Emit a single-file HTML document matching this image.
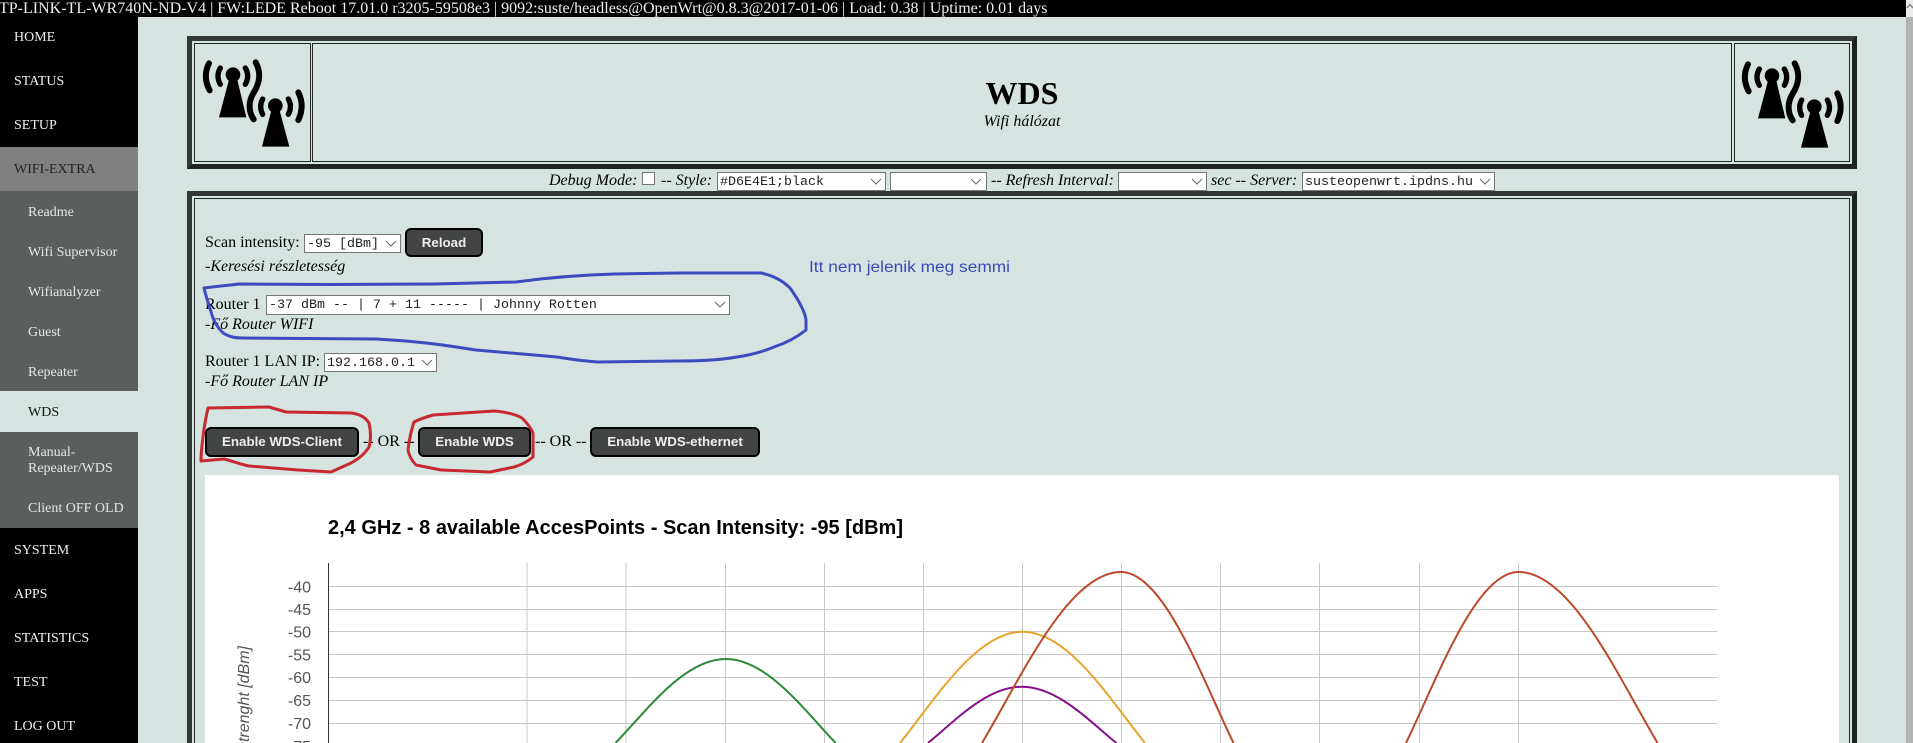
<!DOCTYPE html>
<html lang="hu"><head><meta charset="utf-8"><title>WDS</title>
<style>
html,body{margin:0;padding:0;width:1913px;height:743px;overflow:hidden;background:#D6E4E1}
body{position:relative;font:16px/18px "Liberation Serif",serif;color:#000}
.a{position:absolute;box-sizing:border-box}
.t{position:absolute;white-space:nowrap;line-height:18px}
.i{font-style:italic}
#top{left:0;top:0;width:1906px;height:17px;background:#000;color:#eee;line-height:18px;white-space:nowrap;overflow:hidden;text-indent:-1px}
#side{left:0;top:17px;width:138px;height:726px;background:#000}
.m{position:absolute;left:0;width:138px;font-size:14px;white-space:nowrap;color:#f0f0f0;line-height:16px}
.m.top{padding-left:14px;box-sizing:border-box}
.m.sub{padding-left:28px;box-sizing:border-box;color:#e6e6e6}
.frame{position:absolute;box-sizing:border-box;border-style:solid;border-width:5px;border-color:#333836 #1e2321 #1e2321 #333836}
.cell{position:absolute;box-sizing:border-box;border:1px solid #222725}
select{position:absolute;box-sizing:border-box;appearance:none;-webkit-appearance:none;background:#fff;border:1px solid #767676;border-radius:0;margin:0;padding:1px 0 0 2px;font:13.33px "Liberation Mono",monospace;color:#222}
.btn{position:absolute;box-sizing:border-box;background:#434544;border:2px solid #000;border-radius:6px;color:#eee;font:bold 13.33px/1 "Liberation Sans",sans-serif;text-align:center;display:flex;align-items:center;justify-content:center;white-space:nowrap;padding:0}
#cb{position:absolute;left:642px;top:172px;width:13px;height:13px;box-sizing:border-box;background:#fff;border:1px solid #767676}
#white{left:205px;top:475px;width:1634px;height:268px;background:#fff}
svg{position:absolute;left:0;top:0;pointer-events:none}
</style></head><body>
<div class="a" id="top">TP-LINK-TL-WR740N-ND-V4 | FW:LEDE Reboot 17.01.0 r3205-59508e3 | 9092:suste/headless@OpenWrt@0.8.3@2017-01-06 | Load: 0.38 | Uptime: 0.01 days</div>

<div class="a" id="side"></div>
<div class="a" style="left:0;top:147px;width:138px;height:44px;background:#7f807f"></div>
<div class="a" style="left:0;top:191px;width:138px;height:337px;background:#5a5e5c"></div>
<div class="a" style="left:0;top:391px;width:138px;height:41px;background:#D6E4E1"></div>
<div class="m top" style="top:30px">HOME</div>
<div class="m top" style="top:74px">STATUS</div>
<div class="m top" style="top:118px">SETUP</div>
<div class="m top" style="top:162px;color:#222">WIFI-EXTRA</div>
<div class="m sub" style="top:205px">Readme</div>
<div class="m sub" style="top:245px">Wifi Supervisor</div>
<div class="m sub" style="top:285px">Wifianalyzer</div>
<div class="m sub" style="top:325px">Guest</div>
<div class="m sub" style="top:365px">Repeater</div>
<div class="m sub" style="top:405px;color:#111">WDS</div>
<div class="m sub" style="top:445px">Manual-<br>Repeater/WDS</div>
<div class="m sub" style="top:501px">Client OFF OLD</div>
<div class="m top" style="top:543px">SYSTEM</div>
<div class="m top" style="top:587px">APPS</div>
<div class="m top" style="top:631px">STATISTICS</div>
<div class="m top" style="top:675px">TEST</div>
<div class="m top" style="top:719px">LOG OUT</div>

<div class="frame" style="left:187px;top:36px;width:1670px;height:133px"></div>
<div class="cell" style="left:194px;top:43px;width:117px;height:119px"></div>
<div class="cell" style="left:312px;top:43px;width:1420px;height:119px"></div>
<div class="cell" style="left:1734px;top:43px;width:116px;height:119px"></div>
<div class="t" style="left:312px;width:1420px;text-align:center;top:75px;font-size:32px;font-weight:bold;line-height:37px">WDS</div>
<div class="t i" style="left:312px;width:1420px;text-align:center;top:113px">Wifi hálózat</div>

<div class="t i" style="left:549px;top:172px">Debug Mode:</div>
<div id="cb"></div>
<div class="t i" style="left:661px;top:172px">-- Style:</div>
<select style="left:717px;top:172px;width:169px;height:19px"><option>#D6E4E1;black</option></select>
<select style="left:890px;top:172px;width:97px;height:19px"><option></option></select>
<div class="t i" style="left:991px;top:172px">-- Refresh Interval:</div>
<select style="left:1118px;top:172px;width:89px;height:19px"><option></option></select>
<div class="t i" style="left:1211px;top:172px">sec -- Server:</div>
<select style="left:1302px;top:172px;width:193px;height:19px"><option>susteopenwrt.ipdns.hu</option></select>

<div class="frame" style="left:187px;top:191px;width:1670px;height:552px;border-bottom:none"></div>
<div class="cell" style="left:194px;top:198px;width:1656px;height:545px;border-bottom:none"></div>

<div class="t" style="left:205px;top:234px">Scan intensity:</div>
<select style="left:304px;top:234px;width:97px;height:19px"><option>-95 [dBm]</option></select>
<div class="btn" style="left:405px;top:228px;width:78px;height:29px">Reload</div>
<div class="t i" style="left:205px;top:258px">-Keresési részletesség</div>
<div class="t" style="left:205px;top:296px">Router 1</div>
<select style="left:266px;top:295px;width:464px;height:20px"><option>-37 dBm -- | 7 + 11 ----- | Johnny Rotten</option></select>
<div class="t i" style="left:205px;top:316px">-Fő Router WIFI</div>
<div class="t" style="left:205px;top:353px">Router 1 LAN IP:</div>
<select style="left:324px;top:353px;width:113px;height:19px"><option>192.168.0.1</option></select>
<div class="t i" style="left:205px;top:373px">-Fő Router LAN IP</div>

<div class="btn" style="left:205px;top:427px;width:154px;height:30px">Enable WDS-Client</div>
<div class="t" style="left:363px;top:433px">-- OR --</div>
<div class="btn" style="left:418px;top:427px;width:113px;height:30px">Enable WDS</div>
<div class="t" style="left:535px;top:433px">-- OR --</div>
<div class="btn" style="left:590px;top:427px;width:170px;height:30px">Enable WDS-ethernet</div>

<div class="a" id="white"></div>

<svg width="1913" height="743" viewBox="0 0 1913 743" xmlns="http://www.w3.org/2000/svg">
 <defs>
  <g id="ant">
   <circle cx="144" cy="134" r="22"/><path d="M133 145L156 145L184 262L102 262Z"/>
   <circle cx="271" cy="227" r="22"/><path d="M260 238L283 238L313 350L231 350Z"/>
   <g fill="none" stroke="#000" stroke-linecap="round">
    <g stroke-width="16">
     <path d="M106 114Q92 138 106 163"/>
     <path d="M181 114Q195 138 181 163"/>
     <path d="M233 207Q221 230 233 253"/>
     <path d="M310 207Q323 230 310 253"/>
    </g>
    <g stroke-width="18">
     <path d="M72 100Q52 140 74 181"/>
     <path d="M212 97C230 130 224 160 205 190C190 215 190 245 206 268"/>
     <path d="M340 187Q360 228 340 270"/>
    </g>
   </g>
  </g>
 </defs>
 <use href="#ant" transform="translate(185 30) scale(.3333)"/>
 <use href="#ant" transform="translate(1724 31) scale(.3333)"/>

 <!-- select chevrons -->
 <g fill="none" stroke="#666" stroke-width="1">
  <path d="M871 179l5 5l5-5"/>
  <path d="M971 179l5 5l5-5"/>
  <path d="M1192 179l5 5l5-5"/>
  <path d="M1480 179l5 5l5-5"/>
  <path d="M386 241l5 5l5-5"/>
  <path d="M715 302l5 5l5-5"/>
  <path d="M422 360l5 5l5-5"/>
 </g>

 <!-- chart -->
 <g stroke="#c8c8c8" stroke-width="1" fill="none">
  <path d="M328 586.5H1717M328 609.5H1717M328 631.5H1717M328 654.5H1717M328 677.5H1717M328 700.5H1717M328 723.5H1717"/>
  <path d="M527 563V743M626 563V743M725.5 563V743M824.5 563V743M923.5 563V743M1022.5 563V743M1121.5 563V743M1220.5 563V743M1319.5 563V743M1419.5 563V743M1518.5 563V743"/>
 </g>
 <path d="M328.5 563V743" stroke="#333" stroke-width="1" fill="none"/>
 <g font-family="'Liberation Sans',sans-serif" font-size="16" fill="#555" text-anchor="end">
  <text x="311" y="592.5">-40</text><text x="311" y="615">-45</text><text x="311" y="637.5">-50</text>
  <text x="311" y="660.5">-55</text><text x="311" y="683">-60</text><text x="311" y="706">-65</text>
  <text x="311" y="729">-70</text><text x="311" y="752">-75</text>
 </g>
 <text transform="translate(249 646) rotate(-90)" text-anchor="end" font-family="'Liberation Sans',sans-serif" font-style="italic" font-size="16" fill="#555">Signal strenght [dBm]</text>
 <text x="328" y="534" font-family="'Liberation Sans',sans-serif" font-weight="bold" font-size="20" fill="#000">2,4 GHz - 8 available AccesPoints - Scan Intensity: -95 [dBm]</text>
 <g fill="none" stroke-width="2">
  <path stroke="#2a8a35" d="M615.5 743C646.4 711.1 683.9 659 725.7 659C767.5 659 804.9 711.1 835.7 743"/>
  <path stroke="#e8a32e" d="M900 743C934.3 700.7 976 631.7 1022.5 631.7C1069 631.7 1110.7 700.7 1145 743"/>
  <path stroke="#86108c" d="M928 743C954.3 721.6 986.3 686.7 1022 686.7C1057.7 686.7 1089.7 721.6 1116.5 743"/>
  <path stroke="#bb4a2a" d="M982 743C1020.9 678 1068.2 572 1121 572C1163.7 572 1202 678 1233.5 743"/>
  <path stroke="#bb4a2a" d="M1406 743C1437.5 678 1475.8 572 1518.6 572C1571.4 572 1618.7 678 1657.6 743"/>
 </g>

 <!-- annotations -->
 <path fill="none" stroke="#3c4bbf" stroke-width="3" stroke-linejoin="round" stroke-linecap="round" d="M204 288C210 287 222 286 239 284L330 284.5L435 284L516 282C545 278 580 275 614 274L680 273L761 273C775 276 784 282 790 288C800 302 805 312 806 320L806 330C796 338 786 343 774 347C762 352 750 355 737 357C720 360 700 361 680 361L598 362C580 361 570 359 557 357L476 350C450 346 420 341 374 339L243 338C233 338 228 336 223 333C217 327 214 322 212 315C209 305 206 297 204 288Z"/>
 <path fill="none" stroke="#c8282f" stroke-width="3" stroke-linejoin="round" stroke-linecap="round" d="M208 408L269 407L286 412L351 413C360 414 366 418 369 423C371 432 371 440 369 447C364 455 358 459 351 463L331 472L298 470L249 466C240 464 232 461 224 459L201 461C201 452 202 445 203 437C204 427 206 417 208 408Z"/>
 <path fill="none" stroke="#c8282f" stroke-width="3" stroke-linejoin="round" stroke-linecap="round" d="M414 422C420 419 426 417 433 415L494 411C506 412 515 414 522 418C527 423 531 428 533 433L533 457C527 462 521 465 514 467L490 472L441 470L416 465C411 460 409 455 408 450C409 441 411 431 414 422Z"/>
 <text x="809" y="272" font-family="'Liberation Sans',sans-serif" font-size="15.5" fill="#3a4ab8" textLength="201" lengthAdjust="spacingAndGlyphs">Itt nem jelenik meg semmi</text>
</svg>

<div class="a" style="left:1906px;top:0;width:7px;height:743px;background:#b2b2b2"></div>
<div class="a" style="left:1906px;top:0;width:7px;height:17px;background:#ececec"></div>
<svg width="7" height="17" style="left:1906px;top:0" viewBox="0 0 7 17"><path d="M1 8L4 4.5L7 8" fill="none" stroke="#888" stroke-width="1.5"/></svg>
</body></html>
